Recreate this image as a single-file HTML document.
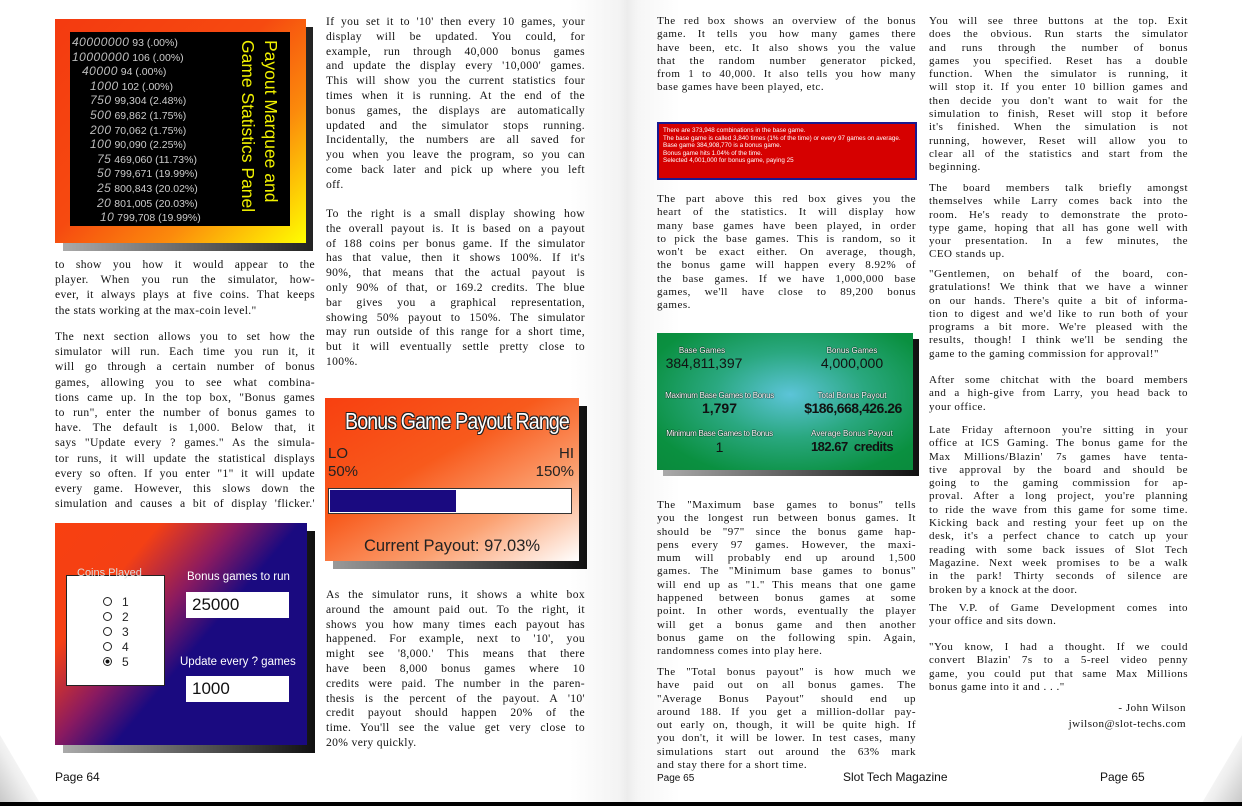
<!DOCTYPE html>
<html><head><meta charset="utf-8"><style>
*{margin:0;padding:0;box-sizing:border-box}
body{width:1242px;height:806px;position:relative;background:#fff;overflow:hidden;font-family:"Liberation Serif",serif;color:#111}
.p{position:absolute;font-size:11.6px;line-height:15.2px;letter-spacing:0.35px}
.m{line-height:14.8px}
.r{font-size:11px;line-height:13.3px;letter-spacing:0.5px}
.p div{text-align:justify;text-align-last:justify;white-space:nowrap}
.p div.l{text-align-last:left}
.sans{font-family:"Liberation Sans",sans-serif}
.abs{position:absolute}
.lcd div{height:14.6px;line-height:14.6px;white-space:nowrap}
.lcd i{font-size:12px;color:#bbb;letter-spacing:0.5px}
</style></head><body>
<div class="abs" style="left:570px;top:0;width:110px;height:806px;background:linear-gradient(90deg,#fff 0%,#f3f3f3 45%,#ececec 52%,#f6f6f6 62%,#fff 100%)"></div>
<div class="abs" style="left:0;top:735px;width:40px;height:68px;background:linear-gradient(60deg,#c8c8c8 0%,#eee 40%,#fff 70%);clip-path:polygon(0 0,60% 60%,100% 100%,0 100%)"></div>
<div class="abs" style="right:0;top:735px;width:40px;height:68px;background:linear-gradient(-60deg,#c8c8c8 0%,#eee 40%,#fff 70%);clip-path:polygon(100% 0,40% 60%,0 100%,100% 100%)"></div>
<div class="abs" style="left:0;top:802px;width:1242px;height:4px;background:#000"></div>

<!-- top-left panel -->
<div class="abs" style="left:63px;top:27px;width:250px;height:224px;background:linear-gradient(90deg,#aaa,#222)"></div>
<div class="abs" style="left:55px;top:19px;width:251px;height:224px;background:linear-gradient(135deg,#f43a10 0%,#f64a10 45%,#fb8a0c 70%,#ffff00 100%)"></div>
<div class="abs sans" style="left:70px;top:32px;width:220px;height:194px;background:#000;color:#ccc;font-size:10.5px;overflow:hidden">
<div class="lcd" style="position:absolute;left:0;top:3px;width:170px">
<div style="padding-left:2px"><i>40000000</i> 93 (.00%)</div>
<div style="padding-left:2px"><i>10000000</i> 106 (.00%)</div>
<div style="padding-left:12px"><i>40000</i> 94 (.00%)</div>
<div style="padding-left:20px"><i>1000</i> 102 (.00%)</div>
<div style="padding-left:20px"><i>750</i> 99,304 (2.48%)</div>
<div style="padding-left:20px"><i>500</i> 69,862 (1.75%)</div>
<div style="padding-left:20px"><i>200</i> 70,062 (1.75%)</div>
<div style="padding-left:20px"><i>100</i> 90,090 (2.25%)</div>
<div style="padding-left:27px"><i>75</i> 469,060 (11.73%)</div>
<div style="padding-left:27px"><i>50</i> 799,671 (19.99%)</div>
<div style="padding-left:27px"><i>25</i> 800,843 (20.02%)</div>
<div style="padding-left:27px"><i>20</i> 801,005 (20.03%)</div>
<div style="padding-left:30px"><i>10</i> 799,708 (19.99%)</div>
</div>
<div style="position:absolute;left:162px;top:8px;width:180px;height:50px;transform-origin:0 0;transform:translate(50px,0) rotate(90deg);color:#f0f000;font-size:17.5px;line-height:23px;white-space:nowrap">Payout Marquee and<br>Game Statistics Panel</div>
</div>

<div class="p" style="left:55px;top:257px;width:260px">
<div>to show you how it would appear to the</div>
<div>player. When you run the simulator, how-</div>
<div>ever, it always plays at five coins. That keeps</div>
<div class="l">the stats working at the max-coin level."</div>
</div>
<div class="p" style="left:55px;top:329px;width:260px">
<div>The next section allows you to set how the</div>
<div>simulator will run. Each time you run it, it</div>
<div>will go through a certain number of bonus</div>
<div>games, allowing you to see what combina-</div>
<div>tions came up. In the top box, "Bonus games</div>
<div>to run", enter the number of bonus games to</div>
<div>have. The default is 1,000. Below that, it</div>
<div>says "Update every ? games." As the simula-</div>
<div>tor runs, it will update the statistical displays</div>
<div>every so often. If you enter "1" it will update</div>
<div>every game. However, this slows down the</div>
<div>simulation and causes a bit of display 'flicker.'</div>
</div>

<!-- bottom-left panel -->
<div class="abs" style="left:63px;top:531px;width:252px;height:222px;background:linear-gradient(90deg,#aaa,#111)"></div>
<div class="abs sans" style="left:55px;top:523px;width:252px;height:222px;background:linear-gradient(130deg,#f84010 0%,#f44014 24%,#8a1a60 42%,#1a0a80 56%,#1a0a80 100%);color:#fff">
<div style="position:absolute;left:11px;top:52px;width:99px;height:111px;background:#fff;border:1px solid #222"></div>
<div style="position:absolute;left:22px;top:44px;font-size:11px;color:#ddd">Coins Played</div>
<div style="position:absolute;left:48px;top:72px;color:#222;font-size:12px;line-height:15px">
<div><span style="display:inline-block;width:9px;height:9px;border:1px solid #222;border-radius:50%;margin-right:10px"></span>1</div>
<div><span style="display:inline-block;width:9px;height:9px;border:1px solid #222;border-radius:50%;margin-right:10px"></span>2</div>
<div><span style="display:inline-block;width:9px;height:9px;border:1px solid #222;border-radius:50%;margin-right:10px"></span>3</div>
<div><span style="display:inline-block;width:9px;height:9px;border:1px solid #222;border-radius:50%;margin-right:10px"></span>4</div>
<div><span style="display:inline-block;width:9px;height:9px;border:1px solid #222;border-radius:50%;margin-right:10px;background:radial-gradient(#111 35%,#fff 45%)"></span>5</div>
</div>
<div style="position:absolute;left:132px;top:48px;font-size:11.5px">Bonus games to run</div>
<div style="position:absolute;left:131px;top:69px;width:103px;height:26px;background:#fff;color:#111;font-size:17px;line-height:26px;padding-left:6px">25000</div>
<div style="position:absolute;left:125px;top:133px;font-size:11.5px">Update every ? games</div>
<div style="position:absolute;left:131px;top:153px;width:103px;height:26px;background:#fff;color:#111;font-size:17px;line-height:26px;padding-left:6px">1000</div>
</div>

<div class="p m" style="left:326px;top:15px;width:259px">
<div>If you set it to '10' then every 10 games, your</div>
<div>display will be updated. You could, for</div>
<div>example, run through 40,000 bonus games</div>
<div>and update the display every '10,000' games.</div>
<div>This will show you the current statistics four</div>
<div>times when it is running. At the end of the</div>
<div>bonus games, the displays are automatically</div>
<div>updated and the simulator stops running.</div>
<div>Incidentally, the numbers are all saved for</div>
<div>you when you leave the program, so you can</div>
<div>come back later and pick up where you left</div>
<div class="l">off.</div>
</div>
<div class="p m" style="left:326px;top:207px;width:259px">
<div>To the right is a small display showing how</div>
<div>the overall payout is. It is based on a payout</div>
<div>of 188 coins per bonus game. If the simulator</div>
<div>has that value, then it shows 100%. If it's</div>
<div>90%, that means that the actual payout is</div>
<div>only 90% of that, or 169.2 credits. The blue</div>
<div>bar gives you a graphical representation,</div>
<div>showing 50% payout to 150%. The simulator</div>
<div>may run outside of this range for a short time,</div>
<div>but it will eventually settle pretty close to</div>
<div class="l">100%.</div>
</div>

<div class="abs" style="left:333px;top:406px;width:254px;height:163px;background:linear-gradient(90deg,#999,#111)"></div>
<div class="abs sans" style="left:325px;top:398px;width:254px;height:163px;background:linear-gradient(150deg,#f84010 0%,#f85a1c 40%,#fba070 70%,#fff 100%);color:#222">
<div style="position:absolute;left:20px;top:10px;font-size:23px;color:#fff;letter-spacing:-1px;transform:scaleX(0.85);transform-origin:0 0;white-space:nowrap;text-shadow:-1px -1px 0 #222,1px -1px 0 #222,-1px 1px 0 #222,1px 1px 0 #222">Bonus Game Payout Range</div>
<div style="position:absolute;left:3px;top:47px;font-size:15px;line-height:18px">LO<br>50%</div>
<div style="position:absolute;right:5px;top:47px;font-size:15px;line-height:18px;text-align:right">HI<br>150%</div>
<div style="position:absolute;left:3px;top:90px;width:244px;height:26px;background:#fff;border:1px solid #333"><div style="width:126px;height:22px;margin:1px;background:#1a0a80"></div></div>
<div style="position:absolute;left:0;width:254px;text-align:center;top:139px;font-size:16.5px">Current Payout: 97.03%</div>
</div>

<div class="p m" style="left:326px;top:588px;width:259px">
<div>As the simulator runs, it shows a white box</div>
<div>around the amount paid out. To the right, it</div>
<div>shows you how many times each payout has</div>
<div>happened. For example, next to '10', you</div>
<div>might see '8,000.' This means that there</div>
<div>have been 8,000 bonus games where 10</div>
<div>credits were paid. The number in the paren-</div>
<div>thesis is the percent of the payout. A '10'</div>
<div>credit payout should happen 20% of the</div>
<div>time. You'll see the value get very close to</div>
<div class="l">20% very quickly.</div>
</div>

<div class="p r" style="left:657px;top:15px;width:259px">
<div>The red box shows an overview of the bonus</div>
<div>game. It tells you how many games there</div>
<div>have been, etc. It also shows you the value</div>
<div>that the random number generator picked,</div>
<div>from 1 to 40,000. It also tells you how many</div>
<div class="l">base games have been played, etc.</div>
</div>
<div class="abs sans" style="left:657px;top:122px;width:260px;height:58px;background:#d60000;border:2px solid #1a1a90;color:#fff;font-size:6.3px;line-height:7.6px;padding:3px 0 0 4px;white-space:nowrap">
There are 373,948 combinations in the base game.<br>The base game is called 3,840 times (1% of the time) or every 97 games on average.<br>Base game 384,908,770 is a bonus game.<br>Bonus game hits 1.04% of the time.<br>Selected 4,001,000 for bonus game, paying 25</div>
<div class="p r" style="left:657px;top:193px;width:259px">
<div>The part above this red box gives you the</div>
<div>heart of the statistics. It will display how</div>
<div>many base games have been played, in order</div>
<div>to pick the base games. This is random, so it</div>
<div>won't be exact either. On average, though,</div>
<div>the bonus game will happen every 8.92% of</div>
<div>the base games. If we have 1,000,000 base</div>
<div>games, we'll have close to 89,200 bonus</div>
<div class="l">games.</div>
</div>

<div class="abs" style="left:663px;top:339px;width:256px;height:137px;background:linear-gradient(90deg,#aaa,#111)"></div>
<div class="abs sans" style="left:657px;top:333px;width:256px;height:137px;background:radial-gradient(ellipse at 52% 45%,#5cc4d8 0%,#2aa880 40%,#0a9040 80%,#0a8a3c 100%);color:#111;text-align:center">
<div style="position:absolute;left:0;width:90px;top:13px;font-size:8px;color:#fff;text-shadow:0 0 1px #000,0 0 1px #000">Base Games</div>
<div style="position:absolute;left:2px;width:90px;top:22px;font-size:14px">384,811,397</div>
<div style="position:absolute;left:150px;width:90px;top:13px;font-size:8px;color:#fff;text-shadow:0 0 1px #000,0 0 1px #000">Bonus Games</div>
<div style="position:absolute;left:150px;width:90px;top:22px;font-size:14px">4,000,000</div>
<div style="position:absolute;left:0;width:125px;top:58px;font-size:8px;color:#fff;text-shadow:0 0 1px #000,0 0 1px #000;letter-spacing:-0.3px">Maximum Base Games to Bonus</div>
<div style="position:absolute;left:0;width:125px;top:67px;font-size:14px;font-weight:bold">1,797</div>
<div style="position:absolute;left:140px;width:110px;top:58px;font-size:8px;color:#fff;text-shadow:0 0 1px #000,0 0 1px #000">Total Bonus Payout</div>
<div style="position:absolute;left:140px;width:112px;top:67px;font-size:14px;font-weight:bold;letter-spacing:-0.5px">$186,668,426.26</div>
<div style="position:absolute;left:0;width:125px;top:96px;font-size:8px;color:#fff;text-shadow:0 0 1px #000,0 0 1px #000;letter-spacing:-0.3px">Minimum Base Games to Bonus</div>
<div style="position:absolute;left:0;width:125px;top:106px;font-size:14px">1</div>
<div style="position:absolute;left:140px;width:110px;top:96px;font-size:8px;color:#fff;text-shadow:0 0 1px #000,0 0 1px #000">Average Bonus Payout</div>
<div style="position:absolute;left:140px;width:110px;top:106px;font-size:13px;font-weight:bold;letter-spacing:-0.5px">182.67&nbsp; credits</div>
</div>

<div class="p r" style="left:657px;top:499px;width:259px">
<div>The "Maximum base games to bonus" tells</div>
<div>you the longest run between bonus games. It</div>
<div>should be "97" since the bonus game hap-</div>
<div>pens every 97 games. However, the maxi-</div>
<div>mum will probably end up around 1,500</div>
<div>games. The "Minimum base games to bonus"</div>
<div>will end up as "1." This means that one game</div>
<div>happened between bonus games at some</div>
<div>point. In other words, eventually the player</div>
<div>will get a bonus game and then another</div>
<div>bonus game on the following spin. Again,</div>
<div class="l">randomness comes into play here.</div>
</div>
<div class="p r" style="left:657px;top:666px;width:259px">
<div>The "Total bonus payout" is how much we</div>
<div>have paid out on all bonus games. The</div>
<div>"Average Bonus Payout" should end up</div>
<div>around 188. If you get a million-dollar pay-</div>
<div>out early on, though, it will be quite high. If</div>
<div>you don't, it will be lower. In test cases, many</div>
<div>simulations start out around the 63% mark</div>
<div class="l">and stay there for a short time.</div>
</div>

<div class="p r" style="left:929px;top:15px;width:259px">
<div>You will see three buttons at the top. Exit</div>
<div>does the obvious. Run starts the simulator</div>
<div>and runs through the number of bonus</div>
<div>games you specified. Reset has a double</div>
<div>function. When the simulator is running, it</div>
<div>will stop it. If you enter 10 billion games and</div>
<div>then decide you don't want to wait for the</div>
<div>simulation to finish, Reset will stop it before</div>
<div>it's finished. When the simulation is not</div>
<div>running, however, Reset will allow you to</div>
<div>clear all of the statistics and start from the</div>
<div class="l">beginning.</div>
</div>
<div class="p r" style="left:929px;top:182px;width:259px">
<div>The board members talk briefly amongst</div>
<div>themselves while Larry comes back into the</div>
<div>room. He's ready to demonstrate the proto-</div>
<div>type game, hoping that all has gone well with</div>
<div>your presentation. In a few minutes, the</div>
<div class="l">CEO stands up.</div>
</div>
<div class="p r" style="left:929px;top:268px;width:259px">
<div>"Gentlemen, on behalf of the board, con-</div>
<div>gratulations! We think that we have a winner</div>
<div>on our hands. There's quite a bit of informa-</div>
<div>tion to digest and we'd like to run both of your</div>
<div>programs a bit more. We're pleased with the</div>
<div>results, though! I think we'll be sending the</div>
<div class="l">game to the gaming commission for approval!"</div>
</div>
<div class="p r" style="left:929px;top:374px;width:259px">
<div>After some chitchat with the board members</div>
<div>and a high-give from Larry, you head back to</div>
<div class="l">your office.</div>
</div>
<div class="p r" style="left:929px;top:424px;width:259px">
<div>Late Friday afternoon you're sitting in your</div>
<div>office at ICS Gaming. The bonus game for the</div>
<div>Max Millions/Blazin' 7s games have tenta-</div>
<div>tive approval by the board and should be</div>
<div>going to the gaming commission for ap-</div>
<div>proval. After a long project, you're planning</div>
<div>to ride the wave from this game for some time.</div>
<div>Kicking back and resting your feet up on the</div>
<div>desk, it's a perfect chance to catch up your</div>
<div>reading with some back issues of Slot Tech</div>
<div>Magazine. Next week promises to be a walk</div>
<div>in the park! Thirty seconds of silence are</div>
<div class="l">broken by a knock at the door.</div>
</div>
<div class="p r" style="left:929px;top:602px;width:259px">
<div>The V.P. of Game Development comes into</div>
<div class="l">your office and sits down.</div>
</div>
<div class="p r" style="left:929px;top:641px;width:259px">
<div>"You know, I had a thought. If we could</div>
<div>convert Blazin' 7s to a 5-reel video penny</div>
<div>game, you could put that same Max Millions</div>
<div class="l">bonus game into it and . . ."</div>
</div>
<div class="p r" style="left:929px;top:700px;width:257px;line-height:16px">
<div class="l" style="text-align:right;text-align-last:right">- John Wilson</div>
<div class="l" style="text-align:right;text-align-last:right">jwilson@slot-techs.com</div>
</div>

<div class="abs sans" style="left:55px;top:770px;font-size:12px">Page 64</div>
<div class="abs sans" style="left:657px;top:773px;font-size:10px">Page 65</div>
<div class="abs sans" style="left:843px;top:770px;font-size:12px">Slot Tech Magazine</div>
<div class="abs sans" style="left:1100px;top:770px;font-size:12px">Page 65</div>
</body></html>
